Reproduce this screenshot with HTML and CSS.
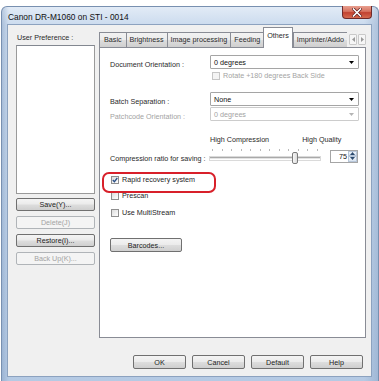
FILE: index.html
```html
<!DOCTYPE html>
<html lang="en">
<head>
    <meta charset="UTF-8">
    <meta name="viewport" content="width=device-width, initial-scale=1.0">
    <title>Canon DR-M1060 on STI - 0014</title>
    <link rel="stylesheet" href="styles.css">
</head>
<body>
    <div class="window">
        <!-- Title bar -->
        <div class="titlebar">
            <span class="title">Canon DR-M1060 on STI - 0014</span>
            <div class="close">
                <svg width="10" height="9" viewBox="0 0 10 9">
                    <path d="M1.5 1 L8.5 8 M8.5 1 L1.5 8" stroke="#5a1a1a" stroke-width="3" stroke-linecap="square"/>
                    <path d="M1.5 1 L8.5 8 M8.5 1 L1.5 8" stroke="#ffffff" stroke-width="1.6" stroke-linecap="square"/>
                </svg>
            </div>
        </div>

        <div class="client">
            <div class="content">
                <!-- Left column: user preference -->
                <div class="side">
                    <div class="side-label">User Preference :</div>
                    <div class="listbox"></div>
                    <button class="btn side-btn first">Save(Y)...</button>
                    <button class="btn side-btn" disabled>Delete(J)</button>
                    <button class="btn side-btn">Restore(I)...</button>
                    <button class="btn side-btn" disabled>Back Up(K)...</button>
                </div>

                <!-- Tabs and page -->
                <div class="main">
                    <div class="tabs">
                        <div class="tab">Basic</div>
                        <div class="tab">Brightness</div>
                        <div class="tab">Image processing</div>
                        <div class="tab">Feeding</div>
                        <div class="tab active">Others</div>
                        <div class="tab cut">Imprinter/Addo</div>
                        <div class="tab-arrows">
                            <span class="arrow-btn">
                                <svg width="3" height="5" viewBox="0 0 3 5"><path d="M3 0 L0 2.5 L3 5 Z" fill="#9a9a9a"/></svg>
                            </span>
                            <span class="arrow-btn">
                                <svg width="3" height="5" viewBox="0 0 3 5"><path d="M0 0 L3 2.5 L0 5 Z" fill="#9a9a9a"/></svg>
                            </span>
                        </div>
                    </div>

                    <div class="panel">
                        <div class="row r-doc">
                            <span class="label">Document Orientation :</span>
                            <div class="combo">
                                <span>0 degrees</span>
                                <svg class="caret" width="5" height="3" viewBox="0 0 5 3"><path d="M0 0 H5 L2.5 3 Z" fill="#000"/></svg>
                            </div>
                        </div>
                        <div class="row r-rotate">
                            <span class="check disabled"></span>
                            <span class="check-text muted">Rotate +180 degrees Back Side</span>
                        </div>
                        <div class="row r-batch">
                            <span class="label">Batch Separation :</span>
                            <div class="combo">
                                <span>None</span>
                                <svg class="caret" width="5" height="3" viewBox="0 0 5 3"><path d="M0 0 H5 L2.5 3 Z" fill="#000"/></svg>
                            </div>
                        </div>
                        <div class="row r-patch">
                            <span class="label muted">Patchcode Orientation :</span>
                            <div class="combo disabled">
                                <span>0 degrees</span>
                                <svg class="caret" width="5" height="3" viewBox="0 0 5 3"><path d="M0 0 H5 L2.5 3 Z" fill="#b4b4b4"/></svg>
                            </div>
                        </div>
                        <div class="row r-hl">
                            <span class="hc">High Compression</span>
                            <span class="hq">High Quality</span>
                        </div>
                        <div class="row r-comp">
                            <span class="label">Compression ratio for saving :</span>
                            <div class="slider">
                                <div class="ticks">
                                    <i></i><i></i><i></i><i></i><i></i><i></i><i></i><i></i><i></i><i></i><i></i><i></i>
                                </div>
                                <div class="track"></div>
                                <div class="thumb"></div>
                            </div>
                            <div class="spin">
                                <span class="spin-val">75</span>
                                <div class="spin-btns">
                                    <span class="spin-btn">
                                        <svg width="5" height="3" viewBox="0 0 5 3"><path d="M0 3 H5 L2.5 0 Z" fill="#2c4a6e"/></svg>
                                    </span>
                                    <span class="spin-btn">
                                        <svg width="5" height="3" viewBox="0 0 5 3"><path d="M0 0 H5 L2.5 3 Z" fill="#2c4a6e"/></svg>
                                    </span>
                                </div>
                            </div>
                        </div>
                        <div class="row r-rapid">
                            <span class="check checked">
                                <svg width="6" height="6" viewBox="0 0 6 6"><path d="M0.8 3 L2.4 4.7 L5.3 1" stroke="#2a4f86" stroke-width="1.3" fill="none"/></svg>
                            </span>
                            <span class="check-text">Rapid recovery system</span>
                        </div>
                        <div class="row r-prescan">
                            <span class="check"></span>
                            <span class="check-text">Prescan</span>
                        </div>
                        <div class="row r-multi">
                            <span class="check"></span>
                            <span class="check-text">Use MultiStream</span>
                        </div>
                        <button class="btn barcodes">Barcodes...</button>

                        <!-- red highlight drawn over the page -->
                        <div class="highlight"></div>
                    </div>
                </div>
            </div>

            <!-- Dialog buttons -->
            <div class="footer">
                <button class="btn foot-btn">OK</button>
                <button class="btn foot-btn">Cancel</button>
                <button class="btn foot-btn">Default</button>
                <button class="btn foot-btn">Help</button>
            </div>
        </div>
    </div>
</body>
</html>
```

FILE: styles.css
```css
body {
    margin: 0;
    background: #ffffff;
    font-family: "Liberation Sans", Arial, sans-serif;
    font-size: 7.2px;
    color: #2a2a2a;
    overflow: hidden;
}

.window {
    margin: 6px 0 0 1px;
    width: 378px;
    height: 375px;
    box-sizing: border-box;
    border: 1px solid #7890b0;
    border-bottom: none;
    border-radius: 6px 6px 0 0;
    padding: 0 7px 4px 6px;
    background:
        linear-gradient(90deg, rgba(110, 140, 180, 0.35) 0, rgba(110, 140, 180, 0) 7px, rgba(110, 140, 180, 0) 362px, rgba(110, 140, 180, 0.3) 100%),
        linear-gradient(180deg, #e2ebf6 0, #cbdbee 18px, #bfd2e9 60%, #b5cae4 100%);
}

/* Title bar */
.titlebar {
    height: 18px;
    display: flex;
    align-items: flex-start;
}

.title {
    font-size: 8.4px;
    line-height: 18px;
    padding-top: 1px;
    color: #111;
}

.close {
    margin-left: auto;
    margin-top: -1px;
    margin-right: -1px;
    width: 30px;
    height: 13px;
    box-sizing: border-box;
    border: 1px solid #6e2a2a;
    border-top: none;
    border-radius: 0 0 4px 4px;
    background: linear-gradient(180deg, #e8a090 0, #d7725f 45%, #c24231 55%, #d56a4f 100%);
    display: flex;
    align-items: center;
    justify-content: center;
}

/* Client area */
.client {
    height: 351px;
    background: #f0f0f0;
    box-shadow: 0 0 0 1px #8ca2bf;
}

.content {
    display: flex;
    height: 313px;
}

.side {
    width: 79px;
    margin-left: 8px;
    display: flex;
    flex-direction: column;
}

.side-label {
    margin-top: 8px;
    line-height: 9px;
    padding-left: 1px;
}

.listbox {
    margin-top: 3px;
    height: 149px;
    box-sizing: border-box;
    background: #fff;
    border: 1px solid #9a9a9a;
    border-top-color: #828790;
}

.btn {
    font-family: "Liberation Sans", Arial, sans-serif;
    font-size: 7.2px;
    color: #222;
    padding: 0;
    box-sizing: border-box;
    border: 1px solid #707070;
    border-radius: 2px;
    background: linear-gradient(180deg, #f4f4f4 0, #ebebeb 48%, #dddddd 52%, #cfcfcf 100%);
}

.btn:disabled {
    border-color: #b0b4b8;
    background: #f4f4f4;
    color: #a3a3a3;
}

.side-btn {
    height: 13px;
    margin-top: 5px;
}

.side-btn.first {
    margin-top: 4px;
}

/* Tabs */
.main {
    width: 267px;
    margin-left: 4px;
    display: flex;
    flex-direction: column;
}

.tabs {
    margin-top: 2px;
    height: 20px;
    display: flex;
    align-items: flex-end;
    position: relative;
    z-index: 1;
}

.tab {
    height: 15px;
    box-sizing: border-box;
    padding: 0 3px;
    line-height: 14px;
    border: 1px solid #898c95;
    border-bottom: none;
    margin-right: -1px;
    background: linear-gradient(180deg, #f2f2f2 0, #ebebeb 50%, #dddddd 51%, #cfcfcf 100%);
    white-space: nowrap;
}

.tab:first-child {
    padding: 0 4px;
}

.tab.active {
    height: 21px;
    margin-bottom: -1px;
    padding: 0 3px;
    line-height: 16px;
    background: #fff;
    margin-right: 0;
}

.tab.cut {
    width: 54px;
    overflow: hidden;
    border-right: none;
    padding-right: 0;
}

.tab-arrows {
    display: flex;
    gap: 1px;
    margin: 0 0 2px auto;
}

.arrow-btn {
    width: 8px;
    height: 11px;
    box-sizing: border-box;
    border: 1px solid #c9c9c9;
    border-radius: 1px;
    background: #f6f6f6;
    display: flex;
    align-items: center;
    justify-content: center;
}

/* Page */
.panel {
    position: relative;
    height: 291px;
    box-sizing: border-box;
    background: #fff;
    border: 1px solid #898c95;
    padding: 0 6px 0 10px;
}

.row {
    display: flex;
    align-items: center;
}

.label {
    width: 100px;
    flex-shrink: 0;
    white-space: nowrap;
}

.muted {
    color: #a3a3a3;
}

.combo {
    width: 149px;
    height: 14px;
    box-sizing: border-box;
    border: 1px solid #a5a5a5;
    border-radius: 1px;
    background: #fff;
    display: flex;
    align-items: center;
    padding: 0 4px 0 3px;
    color: #111;
}

.combo.disabled {
    color: #a3a3a3;
    border-color: #cccccc;
}

.caret {
    margin-left: auto;
}

.r-doc {
    margin-top: 7px;
    height: 14px;
}

.r-doc .label,
.r-batch .label,
.r-patch .label {
    padding-top: 5px;
}

.r-rotate {
    margin-top: 2px;
    height: 9px;
    padding-left: 102px;
}

.r-batch {
    margin-top: 12px;
    height: 14px;
}

.r-patch {
    margin-top: 1px;
    height: 14px;
}

.r-hl {
    margin-top: 14px;
    height: 9px;
}

.hc {
    margin-left: 100px;
}

.hq {
    margin-left: 33px;
}

.r-comp {
    margin-top: 4px;
    height: 18px;
}

.r-comp .label {
    padding-top: 2px;
}

.slider {
    position: relative;
    width: 110px;
    height: 18px;
}

.ticks {
    display: flex;
    justify-content: space-between;
    padding: 1px 2px 0 2px;
}

.ticks i {
    width: 1px;
    height: 2px;
    background: #b9b9b9;
}

.track {
    margin-top: 6px;
    height: 1px;
    border-top: 1px solid #a9a9a9;
    border-bottom: 1px solid #ffffff;
    background: #e4e4e4;
    box-shadow: 0 0 0 1px #dadada;
}

.thumb {
    position: absolute;
    left: 82px;
    top: 4px;
    width: 6px;
    height: 12px;
    box-sizing: border-box;
    border: 1px solid #7b7b7b;
    border-radius: 2px;
    background: linear-gradient(90deg, #f7f7f7, #dcdcdc);
}

.spin {
    margin-left: 10px;
    margin-top: -2px;
    width: 28px;
    height: 13px;
    box-sizing: border-box;
    border: 1px solid #a5a5a5;
    background: #fff;
    display: flex;
    align-items: center;
}

.spin-val {
    margin-left: auto;
    padding-right: 1px;
    color: #111;
}

.spin-btns {
    width: 9px;
    height: 11px;
    display: flex;
    flex-direction: column;
}

.spin-btn {
    flex: 1;
    box-sizing: border-box;
    border: 1px solid #b7c6d9;
    background: linear-gradient(180deg, #f2f6fb, #d8e3f0);
    display: flex;
    align-items: center;
    justify-content: center;
}

.check {
    width: 8px;
    height: 8px;
    box-sizing: border-box;
    border: 1px solid #8f8f8f;
    background: linear-gradient(135deg, #dcdcdc, #ffffff);
    display: flex;
    align-items: center;
    justify-content: center;
    flex-shrink: 0;
}

.check.disabled {
    border-color: #c6c6c6;
    background: #f4f4f4;
}

.check-text {
    margin-left: 3px;
    white-space: nowrap;
    color: #1e1e1e;
}

.check-text.muted {
    color: #a3a3a3;
}

.r-rapid {
    margin-top: 9px;
    height: 9px;
    padding-left: 1px;
}

.r-prescan {
    margin-top: 7px;
    height: 9px;
    padding-left: 1px;
}

.r-multi {
    margin-top: 8px;
    height: 9px;
    padding-left: 1px;
}

.barcodes {
    display: block;
    margin-top: 21px;
    width: 72px;
    height: 14px;
}

.highlight {
    position: absolute;
    left: 2px;
    top: 124px;
    width: 114px;
    height: 21px;
    box-sizing: border-box;
    border: 2px solid #d8202a;
    border-radius: 7px;
}

/* Dialog buttons */
.footer {
    display: flex;
    gap: 6px;
    margin-top: 17px;
    padding-left: 125px;
}

.foot-btn {
    width: 53px;
    height: 14px;
}
```
